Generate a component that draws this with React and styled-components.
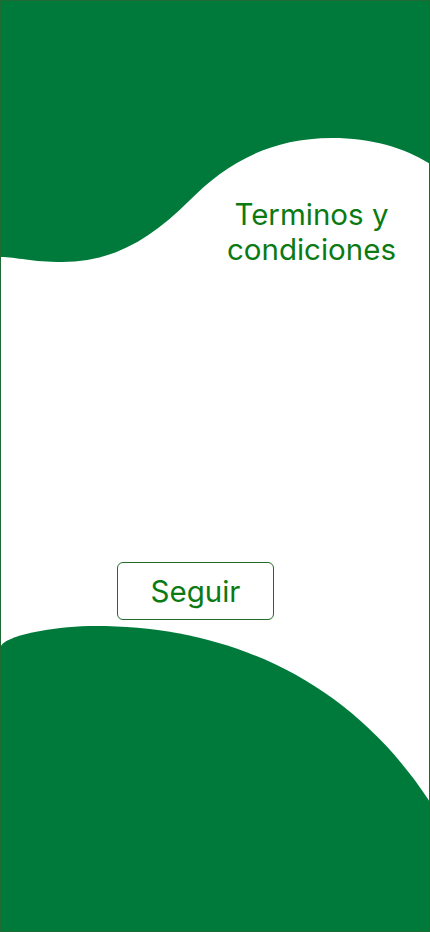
import React from 'react'
import styled, {createGlobalStyle} from 'styled-components'

const GlobalStyle = createGlobalStyle`
  html, body {
    margin: 0;
    padding: 0;
    background: #ffffff;
  }
  body {
    font-family: Inter, 'Noto Sans', sans-serif;
    -webkit-font-smoothing: antialiased;
  }
`

const Screen = styled('div')`
  display: flex;
  flex-direction: column;
  width: 430px;
  height: 932px;
  box-sizing: border-box;
  border: 1px solid #1f6a34;
  overflow: hidden;
  background: #ffffff;
`

const Hero = styled('header')`
  position: relative;
  display: flex;
  justify-content: flex-end;
  height: 300px;
  padding: 196px 33px 0 0;
  box-sizing: border-box;
`

const Wave = styled('svg')`
  position: absolute;
  top: -1px;
  left: -1px;
  width: 430px;
  height: 300px;
  display: block;
`

const Title = styled('h1')`
  position: relative;
  margin: 0;
  font-size: 29.5px;
  line-height: 35px;
  font-weight: 400;
  text-align: center;
  color: #0b7a12;
`

const Main = styled('main')`
  flex: 1;
  display: flex;
  align-items: flex-end;
  padding: 0 0 6px 116px;
`

const Button = styled('button')`
  width: 157px;
  height: 58px;
  border: 1px solid #226b2a;
  border-radius: 6px;
  background: #ffffff;
  color: #0b7a12;
  font-family: Inter, 'Noto Sans', sans-serif;
  font-size: 29.5px;
  font-weight: 400;
  cursor: pointer;
`

const Footer = styled('svg')`
  display: block;
  flex: none;
  width: 430px;
  height: 305px;
  margin-left: -1px;
`

const GREEN = '#007a3b'

export default function App() {
  return (
    <>
      <GlobalStyle />
      <Screen>
        <Hero>
          <Wave viewBox='0 0 430 300'>
            <path
              fill={GREEN}
              d='M0,0 H430 V164 C405,148 372,138 332,138 C265,138 222,168 190,200 C150,240 112,262 62,262 C32,262 15,257 0,257 Z'
            />
          </Wave>
          <Title>Terminos y<br />condiciones</Title>
        </Hero>
        <Main>
          <Button>Seguir</Button>
        </Main>
        <Footer viewBox='0 0 430 305'>
          <path
            fill={GREEN}
            d='M0,21 C6,8 60,0 95,0 C230,0 350,54 430,176 V305 H0 Z'
          />
        </Footer>
      </Screen>
    </>
  )
}
